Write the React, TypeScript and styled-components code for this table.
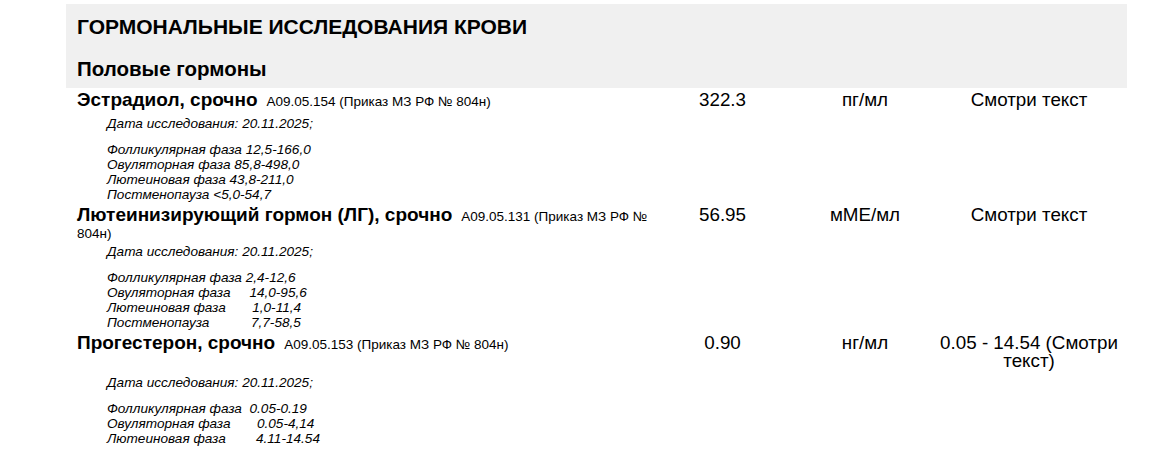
import React from "react";
import styled, { createGlobalStyle } from "styled-components";

const GlobalStyle = createGlobalStyle`
  body {
    margin: 0;
    background: #fff;
    color: #000;
    font-family: "Liberation Sans", Arial, sans-serif;
  }
`;

const Page = styled.div`
  width: 1061px;
  padding: 4px 0 0 66px;
`;

const Header = styled.div`
  background: #f0f0f0;
  height: 84px;
  padding: 0 11px;
  box-sizing: border-box;
`;

const Title = styled.h1`
  margin: 0;
  padding-top: 11px;
  font-size: 21px;
  line-height: 24px;
  font-weight: bold;
`;

const Subtitle = styled.h2`
  margin: 18px 0 0;
  font-size: 20.5px;
  line-height: 24px;
  font-weight: bold;
`;

const TestRow = styled.div<{ $top: number }>`
  display: grid;
  grid-template-columns: 575px 141px 144px 184px;
  align-items: baseline;
  padding-left: 11px;
  margin-top: ${(p) => p.$top}px;
`;

const NameCell = styled.div`
  font-size: 13.5px;
  line-height: 17px;
`;

const TestName = styled.span`
  font-size: 19px;
  font-weight: bold;
  margin-right: 9px;
`;

const ValueCell = styled.div`
  font-size: 18.8px;
  line-height: 18px;
  text-align: center;
`;

const Comment = styled.div`
  padding-left: 41px;
  font-style: italic;
  font-size: 13.6px;
`;

const DateLine = styled.div<{ $top: number }>`
  line-height: 16px;
  margin-top: ${(p) => p.$top}px;
`;

const Phases = styled.div`
  margin-top: 10px;
  line-height: 15px;
  white-space: pre;
`;

interface Test {
  name: string;
  code: string;
  value: string;
  unit: string;
  reference: string;
  top: number;
  dateTop: number;
  phases: string[];
}

const tests: Test[] = [
  {
    name: "Эстрадиол, срочно",
    code: "A09.05.154 (Приказ МЗ РФ № 804н)",
    value: "322.3",
    unit: "пг/мл",
    reference: "Смотри текст",
    top: 3,
    dateTop: 6,
    phases: [
      "Фолликулярная фаза 12,5-166,0",
      "Овуляторная фаза 85,8-498,0",
      "Лютеиновая фаза 43,8-211,0",
      "Постменопауза <5,0-54,7",
    ],
  },
  {
    name: "Лютеинизирующий гормон (ЛГ), срочно",
    code: "A09.05.131 (Приказ МЗ РФ № 804н)",
    value: "56.95",
    unit: "мМЕ/мл",
    reference: "Смотри текст",
    top: 4,
    dateTop: 2,
    phases: [
      "Фолликулярная фаза 2,4-12,6",
      "Овуляторная фаза     14,0-95,6",
      "Лютеиновая фаза       1,0-11,4",
      "Постменопауза           7,7-58,5",
    ],
  },
  {
    name: "Прогестерон, срочно",
    code: "A09.05.153 (Приказ МЗ РФ № 804н)",
    value: "0.90",
    unit: "нг/мл",
    reference: "0.05 - 14.54 (Смотри текст)",
    top: 4,
    dateTop: 5,
    phases: [
      "Фолликулярная фаза  0.05-0.19",
      "Овуляторная фаза       0.05-4,14",
      "Лютеиновая фаза        4.11-14.54",
    ],
  },
];

export default function App() {
  return (
    <>
      <GlobalStyle />
      <Page>
        <Header>
          <Title>ГОРМОНАЛЬНЫЕ ИССЛЕДОВАНИЯ КРОВИ</Title>
          <Subtitle>Половые гормоны</Subtitle>
        </Header>
        {tests.map((t) => (
          <section key={t.code}>
            <TestRow $top={t.top}>
              <NameCell>
                <TestName>{t.name}</TestName>
                {t.code}
              </NameCell>
              <ValueCell>{t.value}</ValueCell>
              <ValueCell>{t.unit}</ValueCell>
              <ValueCell>{t.reference}</ValueCell>
            </TestRow>
            <Comment>
              <DateLine $top={t.dateTop}>Дата исследования: 20.11.2025;</DateLine>
              <Phases>{t.phases.join("\n")}</Phases>
            </Comment>
          </section>
        ))}
      </Page>
    </>
  );
}
